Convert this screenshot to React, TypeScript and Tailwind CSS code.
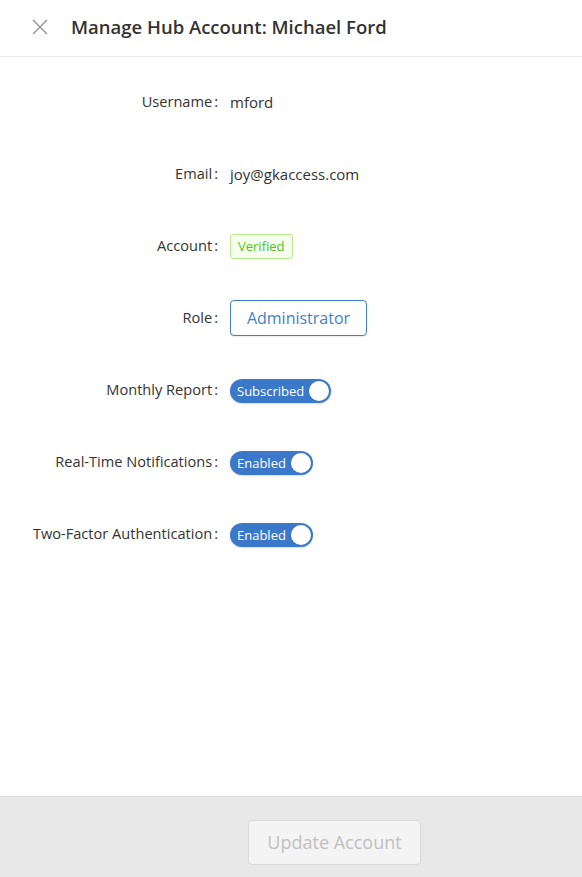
import { useState } from "react";

type Field = { label: string; kind: "text" | "badge" | "button" | "toggle"; value: string };

const fields: Field[] = [
  { label: "Username", kind: "text", value: "mford" },
  { label: "Email", kind: "text", value: "joy@gkaccess.com" },
  { label: "Account", kind: "badge", value: "Verified" },
  { label: "Role", kind: "button", value: "Administrator" },
  { label: "Monthly Report", kind: "toggle", value: "Subscribed" },
  { label: "Real-Time Notifications", kind: "toggle", value: "Enabled" },
  { label: "Two-Factor Authentication", kind: "toggle", value: "Enabled" },
];

function Toggle({ text }: { text: string }) {
  const [on, setOn] = useState(true);
  return (
    <button
      onClick={() => setOn(!on)}
      className="mt-[2px] flex h-[24px] items-center rounded-full bg-[#3b78c9] pl-[7px] pr-[2px] shadow-[0_1px_2px_rgba(0,0,0,0.15)]"
    >
      <span className="pr-[5px] text-[13px] leading-none text-white">{on ? text : "Off"}</span>
      <span className="h-[20px] w-[20px] rounded-full bg-white" />
    </button>
  );
}

function Value({ f }: { f: Field }) {
  if (f.kind === "badge")
    return (
      <span className="rounded-[3px] border border-[#b7eb8f] bg-[#f6ffed] px-[7px] py-[3px] text-[13px] leading-[17px] text-[#52c41a]">
        {f.value}
      </span>
    );
  if (f.kind === "button")
    return (
      <button className="h-[36px] w-[137px] rounded-[4px] border border-[#3f7fd0] bg-white text-[16px] text-[#3f7fd0] shadow-[0_1px_2px_rgba(0,0,0,0.08)]">
        {f.value}
      </button>
    );
  if (f.kind === "toggle") return <Toggle text={f.value} />;
  return <span className="text-[15px] text-[#333]">{f.value}</span>;
}

export default function App() {
  return (
    <div className="flex h-[877px] w-full flex-col bg-white font-['Open_Sans',sans-serif] text-[#333]">
      <div className="flex h-[57px] shrink-0 items-center border-b border-[#ebebeb] pb-[3px] pl-[32px]">
        <svg width="16" height="16" viewBox="0 0 16 16" className="mr-[23px]">
          <path d="M1 1L15 15M15 1L1 15" stroke="#9a9a9a" strokeWidth="1.5" />
        </svg>
        <h1 className="text-[18.5px] font-semibold text-[#333]">Manage Hub Account: Michael Ford</h1>
      </div>

      <div className="flex flex-1 flex-col gap-[36px] pt-[27px]">
        {fields.map((f) => (
          <div key={f.label} className="flex h-[36px] items-center">
            <div className="w-[220px] shrink-0 text-right text-[14.6px] text-[#333]">
              {f.label}
              <span className="ml-[2px] mr-[2px]">:</span>
            </div>
            <div className="ml-[10px] flex items-center">
              <Value f={f} />
            </div>
          </div>
        ))}
      </div>

      <div className="flex h-[81px] shrink-0 items-start border-t border-[#dcdcdc] bg-[#e8e8e8] pl-[248px] pt-[23px]">
        <button
          disabled
          className="h-[45px] w-[173px] rounded-[4px] border border-[#d9d9d9] bg-[#f4f4f4] text-[18px] text-[#c0c0c0]"
        >
          Update Account
        </button>
      </div>
    </div>
  );
}
